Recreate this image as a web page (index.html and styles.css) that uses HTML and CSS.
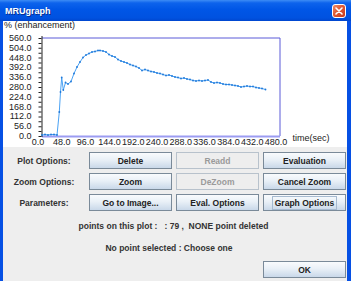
FILE: index.html
```html
<!DOCTYPE html>
<html lang="en">
<head>
    <meta charset="UTF-8">
    <meta name="viewport" content="width=device-width, initial-scale=1.0">
    <title>MRUgraph</title>
    <link rel="stylesheet" href="styles.css">
</head>
<body>
<div class="window">
    <div class="titlebar">
        <span class="title">MRUgraph</span>
        <span class="close">
            <svg width="8" height="8" viewBox="0 0 8 8"><path d="M1 1L7 7M7 1L1 7" stroke="#fff" stroke-width="1.6" stroke-linecap="round"/></svg>
        </span>
    </div>
    <div class="frame">
        <div class="plot">
            <svg class="chart" width="344" height="126" viewBox="3 21 344 126">
                <defs>
                    <marker id="dot" markerWidth="3" markerHeight="3" refX="1.5" refY="1.5" markerUnits="userSpaceOnUse">
                        <circle cx="1.5" cy="1.5" r="0.9" fill="#1f78d8"/>
                    </marker>
                </defs>
                <text class="unit" x="4" y="28">% (enhancement)</text>

                <!-- frame of the plot -->
                <line x1="42" y1="38" x2="280" y2="38" stroke="#5a5ad8" stroke-width="1"/>
                <line x1="280" y1="38" x2="280" y2="136" stroke="#5a5ad8" stroke-width="1"/>
                <line x1="42" y1="136.5" x2="280" y2="136.5" stroke="#9c9cf2" stroke-width="2"/>
                <line x1="42" y1="36" x2="42" y2="137" stroke="#222" stroke-width="1"/>
                <line x1="40" y1="38" x2="40" y2="137" stroke="#222" stroke-width="3" stroke-dasharray="1 3.9"/>

                <g class="ylab">
                    <text x="31.5" y="41">560.0</text>
                    <text x="31.5" y="50.8">504.0</text>
                    <text x="31.5" y="60.6">448.0</text>
                    <text x="31.5" y="70.4">392.0</text>
                    <text x="31.5" y="80.2">336.0</text>
                    <text x="31.5" y="90">280.0</text>
                    <text x="31.5" y="99.8">224.0</text>
                    <text x="31.5" y="109.6">168.0</text>
                    <text x="31.5" y="119.4">112.0</text>
                    <text x="31.5" y="129.2">56.0</text>
                    <text x="31.5" y="139">0.0</text>
                </g>
                <g class="xlab">
                    <text x="38" y="144.5">0.0</text>
                    <text x="61.8" y="144.5">48.0</text>
                    <text x="85.6" y="144.5">96.0</text>
                    <text x="109.4" y="144.5">144.0</text>
                    <text x="133.2" y="144.5">192.0</text>
                    <text x="157" y="144.5">240.0</text>
                    <text x="180.8" y="144.5">288.0</text>
                    <text x="204.6" y="144.5">336.0</text>
                    <text x="228.4" y="144.5">384.0</text>
                    <text x="252.2" y="144.5">432.0</text>
                    <text x="276" y="144.5">480.0</text>
                </g>
                <text class="unit" x="292.5" y="141">time(sec)</text>

                <polyline class="curve" marker-start="url(#dot)" marker-mid="url(#dot)" marker-end="url(#dot)"
                    points="42,135 45,134.5 48,135 51,134.5 54,134.5 57,135 59.3,112 60.5,92 61.7,77.5 63.3,90 65.5,82.5 68,84 71,81.5 74,73.5 77,67 80,62 83,57.5 86,55 89,53.5 92,52 95,51.5 98,50.5 100,50.5 103,51 106,52 109,54.5 112,56 115,57 118,59.5 121,61 124,62 127,63 130,64.5 133,65.5 136,66.5 139,68 142,70.5 145,69.5 148,70.5 151,71.5 154,72 157,73 160,73.5 163,74.5 166,75.5 169,75 172,76 175,77 178,77.5 181,78.5 184,78 187,79 190,79.5 193,80.5 196,81 199,80.5 202,81 205,80.5 208,80 211,82 214,83 217,82.5 220,83 223,84 226,84.5 229,84.5 232,85 235,85.5 238,86 241,87 244,86.5 247,86 250,86.5 253,86.5 256,87.5 259,88 262,88.5 265.5,89.5"/>
            </svg>
        </div>

        <div class="controls">
            <div class="grid">
                <span class="label">Plot Options:</span>
                <button class="btn">Delete</button>
                <button class="btn" disabled>Readd</button>
                <button class="btn">Evaluation</button>

                <span class="label">Zoom Options:</span>
                <button class="btn">Zoom</button>
                <button class="btn" disabled>DeZoom</button>
                <button class="btn">Cancel Zoom</button>

                <span class="label">Parameters:</span>
                <button class="btn">Go to Image...</button>
                <button class="btn">Eval. Options</button>
                <button class="btn"><span class="focus">Graph Options</span></button>
            </div>
            <p class="status first">points on this plot :   : 79 ,  NONE point deleted</p>
            <p class="status second">No point selected : Choose one</p>
            <div class="footer">
                <button class="btn ok">OK</button>
            </div>
        </div>
    </div>
</div>
</body>
</html>
```

FILE: styles.css
```css
body {
    margin: 0;
    background: #fff;
    font-family: 'Liberation Sans', Arial, sans-serif;
}
.window {
    width: 351px;
    height: 281px;
    overflow: hidden;
}
.titlebar {
    height: 21px;
    display: flex;
    align-items: center;
    justify-content: space-between;
    padding: 0 5px;
    box-sizing: border-box;
    background: linear-gradient(to bottom, #3d8cf5 0%, #0d63ec 14%, #0056e6 45%, #0052e0 85%, #0046cf 100%);
}
.title {
    color: #fff;
    font-weight: bold;
    font-size: 9px;
    text-shadow: 1px 1px 0 #0a2f8f;
}
.close {
    width: 12px;
    height: 12px;
    border: 1px solid #fff;
    border-radius: 3px;
    background: linear-gradient(135deg, #f08a66 0%, #e05a34 45%, #c5391a 100%);
    display: flex;
    align-items: center;
    justify-content: center;
    margin-top: 1px;
}
.frame {
    border-left: 3px solid #0650e4;
    border-right: 4px solid #0650e4;
    border-bottom: 3px solid #0650e4;
    height: 260px;
}
.plot {
    height: 126px;
    background: #fff;
}
.chart {
    display: block;
}
.chart text {
    font-family: 'Liberation Sans', Arial, sans-serif;
    font-size: 9px;
    fill: #222;
}
.ylab text {
    text-anchor: end;
}
.xlab text {
    text-anchor: middle;
}
.curve {
    fill: none;
    stroke: #4aa2f4;
    stroke-width: 1;
}
.controls {
    height: 134px;
    background: #eeeeee;
    padding-top: 5px;
    box-sizing: border-box;
}
.grid {
    display: grid;
    grid-template-columns: 82px 83px 83px 83px;
    grid-auto-rows: 17px;
    column-gap: 4px;
    row-gap: 4px;
}
.label {
    display: flex;
    align-items: center;
    justify-content: center;
    font-size: 8.5px;
    font-weight: bold;
    color: #333;
}
.btn {
    margin: 0;
    padding: 0;
    height: 17px;
    border: 1px solid #7a8a99;
    background: linear-gradient(to bottom, #f9fbfd 0%, #e9f0f7 45%, #c9d8e9 100%);
    font-family: 'Liberation Sans', Arial, sans-serif;
    font-size: 8.5px;
    font-weight: bold;
    color: #222;
}
.btn:disabled {
    border-color: #b8c2cc;
    background: #eeeeee;
    color: #9a9a9a;
}
.focus {
    border: 1px solid #a6bad0;
    padding: 1px 2px;
}
.status {
    margin: 0;
    height: 22px;
    line-height: 22px;
    text-align: center;
    white-space: pre;
    font-size: 8.5px;
    font-weight: bold;
    color: #333;
}
.first {
    margin-top: 4px;
    padding-right: 3px;
}
.second {
    padding-right: 12px;
}
.footer {
    display: flex;
    justify-content: flex-end;
    margin-top: 2px;
    padding-right: 1px;
}
.ok {
    width: 83px;
}
```
